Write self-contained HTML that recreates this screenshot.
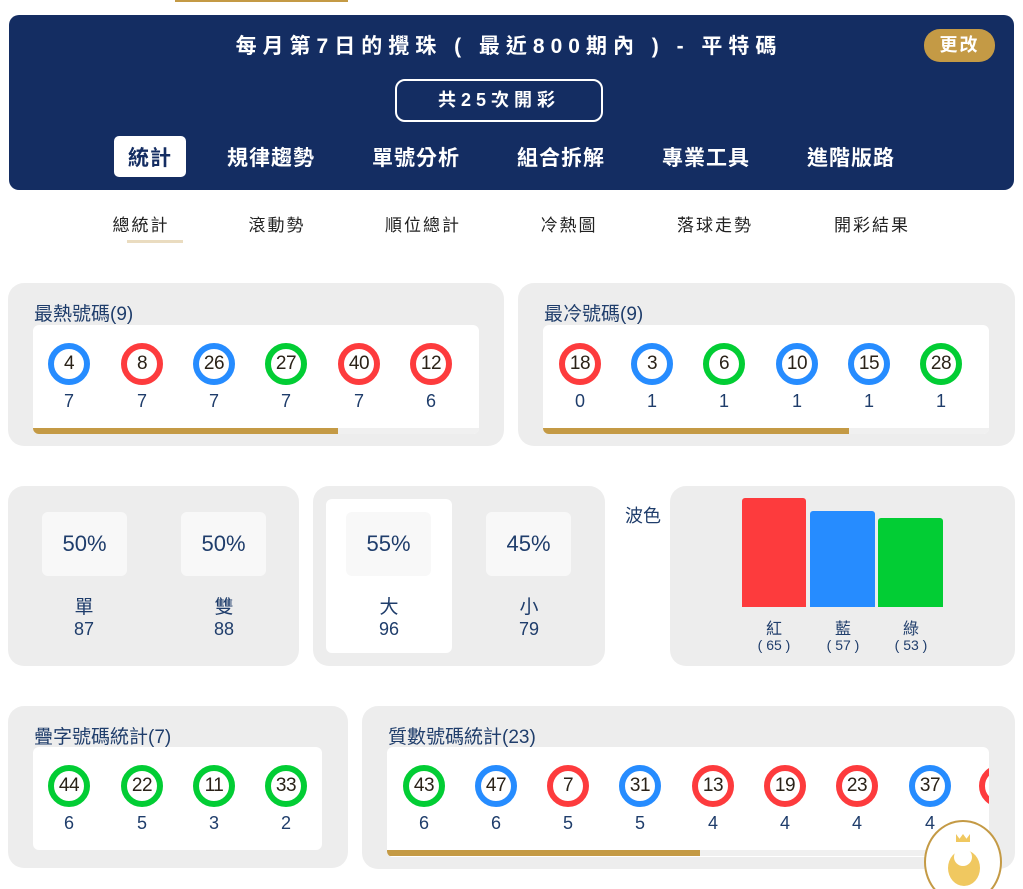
<!DOCTYPE html>
<html><head><meta charset="utf-8"><style>
*{margin:0;padding:0;box-sizing:border-box}
html,body{width:1023px;height:889px;overflow:hidden}
body{background:#fff;font-family:"Liberation Sans","Noto Sans CJK TC",sans-serif;position:relative;color:#1f3d6b}
.a{position:absolute}
.c{position:absolute;text-align:center;transform:translateX(-50%);white-space:nowrap}
.card{position:absolute;background:#ededed;border-radius:16px}
.in{position:absolute;background:#fff;border-radius:6px;overflow:hidden}
.ball{position:absolute;width:42px;height:42px;border-radius:50%;border:6px solid;background:#fff;color:#2a2218;font-size:19px;line-height:30px;text-align:center;transform:translate(-50%,-50%);letter-spacing:-0.5px}
.r{border-color:#fd3b3d}.b{border-color:#268cff}.g{border-color:#02cd34}
.cnt{position:absolute;font-size:18px;transform:translateX(-50%);color:#1f3d6b}
.ttl{position:absolute;font-size:19px;color:#1f3d6b}
.pb{position:absolute;background:#f8f8f8;border-radius:6px;font-size:22px;text-align:center;line-height:64px;width:85px;height:64px}
.tab{position:absolute;color:#fff;font-size:21px;font-weight:bold;letter-spacing:1px;transform:translateX(-50%);top:142px}
.st{position:absolute;font-size:17px;color:#222;letter-spacing:2px;transform:translateX(-50%);top:211px}
</style></head><body>
<div class="a" style="left:175px;top:0;width:173px;height:2px;background:#c49a45"></div>
<div class="a" style="left:9px;top:15px;width:1005px;height:175px;background:#142d62;border-radius:10px"></div>
<div class="c" style="left:509px;top:30px;color:#fff;font-size:21px;font-weight:bold;letter-spacing:6px">每月第7日的攪珠 ( 最近800期內 ) - 平特碼</div>
<div class="a" style="left:924px;top:29px;width:71px;height:33px;background:#c49a45;border-radius:16px;color:#fff;font-size:18px;font-weight:bold;text-align:center;line-height:33px;letter-spacing:2px">更改</div>
<div class="a" style="left:395px;top:79px;width:208px;height:43px;border:2px solid #fff;border-radius:10px;color:#fff;font-size:18px;font-weight:bold;text-align:center;line-height:39px;letter-spacing:5px">共25次開彩</div>
<div class="a" style="left:114px;top:136px;width:72px;height:41px;background:#fff;border-radius:5px"></div>
<div class="tab" style="left:150px;color:#142d62">統計</div>
<div class="tab" style="left:271px">規律趨勢</div>
<div class="tab" style="left:416px">單號分析</div>
<div class="tab" style="left:561px">組合拆解</div>
<div class="tab" style="left:706px">專業工具</div>
<div class="tab" style="left:851px">進階版路</div>
<div class="st" style="left:141px">總統計</div>
<div class="st" style="left:277px">滾動勢</div>
<div class="st" style="left:423px">順位總計</div>
<div class="st" style="left:569px">冷熱圖</div>
<div class="st" style="left:715px">落球走勢</div>
<div class="st" style="left:872px">開彩結果</div>
<div class="a" style="left:127px;top:240px;width:56px;height:3px;background:#eadcc0"></div>

<div class="card" style="left:8px;top:283px;width:496px;height:163px"></div>
<div class="ttl" style="left:34px;top:299px">最熱號碼(9)</div>
<div class="in" style="left:33px;top:325px;width:446px;height:109px">
<div class="a" style="left:0;bottom:0;width:446px;height:6px;background:#f0f0f0"></div>
<div class="a" style="left:0;bottom:0;width:305px;height:6px;background:#c49a45"></div></div>
<div class="ball b" style="left:69px;top:364px">4</div><div class="ball r" style="left:142px;top:364px">8</div><div class="ball b" style="left:214px;top:364px">26</div><div class="ball g" style="left:286px;top:364px">27</div><div class="ball r" style="left:359px;top:364px">40</div><div class="ball r" style="left:431px;top:364px">12</div>
<div class="cnt" style="left:69px;top:391px">7</div><div class="cnt" style="left:142px;top:391px">7</div><div class="cnt" style="left:214px;top:391px">7</div><div class="cnt" style="left:286px;top:391px">7</div><div class="cnt" style="left:359px;top:391px">7</div><div class="cnt" style="left:431px;top:391px">6</div>

<div class="card" style="left:518px;top:283px;width:497px;height:163px"></div>
<div class="ttl" style="left:544px;top:299px">最冷號碼(9)</div>
<div class="in" style="left:543px;top:325px;width:446px;height:109px">
<div class="a" style="left:0;bottom:0;width:446px;height:6px;background:#f0f0f0"></div>
<div class="a" style="left:0;bottom:0;width:306px;height:6px;background:#c49a45"></div></div>
<div class="ball r" style="left:580px;top:364px">18</div><div class="ball b" style="left:652px;top:364px">3</div><div class="ball g" style="left:724px;top:364px">6</div><div class="ball b" style="left:797px;top:364px">10</div><div class="ball b" style="left:869px;top:364px">15</div><div class="ball g" style="left:941px;top:364px">28</div>
<div class="cnt" style="left:580px;top:391px">0</div><div class="cnt" style="left:652px;top:391px">1</div><div class="cnt" style="left:724px;top:391px">1</div><div class="cnt" style="left:797px;top:391px">1</div><div class="cnt" style="left:869px;top:391px">1</div><div class="cnt" style="left:941px;top:391px">1</div>

<div class="card" style="left:8px;top:486px;width:291px;height:180px"></div>
<div class="pb" style="left:42px;top:512px">50%</div><div class="pb" style="left:181px;top:512px">50%</div>
<div class="cnt" style="left:84px;top:592px;font-size:19px">單</div><div class="cnt" style="left:224px;top:592px;font-size:19px">雙</div>
<div class="cnt" style="left:84px;top:619px">87</div><div class="cnt" style="left:224px;top:619px">88</div>
<div class="card" style="left:313px;top:486px;width:292px;height:180px"></div>
<div class="a" style="left:326px;top:499px;width:126px;height:154px;background:#fff;border-radius:6px"></div>
<div class="pb" style="left:346px;top:512px">55%</div><div class="pb" style="left:486px;top:512px">45%</div>
<div class="cnt" style="left:389px;top:592px;font-size:19px">大</div><div class="cnt" style="left:529px;top:592px;font-size:19px">小</div>
<div class="cnt" style="left:389px;top:619px">96</div><div class="cnt" style="left:529px;top:619px">79</div>
<div class="ttl" style="left:625px;top:502px;font-size:18px">波色</div>
<div class="card" style="left:670px;top:486px;width:345px;height:180px"></div>
<div class="a" style="left:742px;top:498px;width:64px;height:109px;background:#fd3b3d;border-radius:3px 3px 0 0"></div>
<div class="a" style="left:810px;top:511px;width:65px;height:96px;background:#268cff;border-radius:3px 3px 0 0"></div>
<div class="a" style="left:878px;top:518px;width:65px;height:89px;background:#02cd34;border-radius:3px 3px 0 0"></div>
<div class="cnt" style="left:774px;top:615px;font-size:16px">紅</div><div class="cnt" style="left:843px;top:615px;font-size:16px">藍</div><div class="cnt" style="left:911px;top:615px;font-size:16px">綠</div>
<div class="cnt" style="left:774px;top:637px;font-size:14px">( 65 )</div><div class="cnt" style="left:843px;top:637px;font-size:14px">( 57 )</div><div class="cnt" style="left:911px;top:637px;font-size:14px">( 53 )</div>

<div class="card" style="left:8px;top:706px;width:340px;height:162px"></div>
<div class="ttl" style="left:34px;top:722px">疊字號碼統計(7)</div>
<div class="in" style="left:33px;top:747px;width:289px;height:103px"></div>
<div class="ball g" style="left:69px;top:786px">44</div><div class="ball g" style="left:142px;top:786px">22</div><div class="ball g" style="left:214px;top:786px">11</div><div class="ball g" style="left:286px;top:786px">33</div>
<div class="cnt" style="left:69px;top:813px">6</div><div class="cnt" style="left:142px;top:813px">5</div><div class="cnt" style="left:214px;top:813px">3</div><div class="cnt" style="left:286px;top:813px">2</div>

<div class="card" style="left:362px;top:706px;width:653px;height:163px"></div>
<div class="ttl" style="left:388px;top:722px">質數號碼統計(23)</div>
<div class="in" style="left:387px;top:747px;width:602px;height:110px">
<div class="ball r" style="left:613px;top:39px">41</div>
<div class="a" style="left:0;top:103px;width:602px;height:6px;background:#f0f0f0"></div>
<div class="a" style="left:0;top:103px;width:313px;height:6px;background:#c49a45"></div></div>
<div class="ball g" style="left:424px;top:786px">43</div><div class="ball b" style="left:496px;top:786px">47</div><div class="ball r" style="left:568px;top:786px">7</div><div class="ball b" style="left:640px;top:786px">31</div><div class="ball r" style="left:713px;top:786px">13</div><div class="ball r" style="left:785px;top:786px">19</div><div class="ball r" style="left:857px;top:786px">23</div><div class="ball b" style="left:930px;top:786px">37</div>
<div class="cnt" style="left:424px;top:813px">6</div><div class="cnt" style="left:496px;top:813px">6</div><div class="cnt" style="left:568px;top:813px">5</div><div class="cnt" style="left:640px;top:813px">5</div><div class="cnt" style="left:713px;top:813px">4</div><div class="cnt" style="left:785px;top:813px">4</div><div class="cnt" style="left:857px;top:813px">4</div><div class="cnt" style="left:930px;top:813px">4</div>

<div class="a" style="left:924px;top:820px;width:78px;height:84px;border-radius:50%;border:2px solid #c49a45;background:#fff"></div>
<div class="a" style="left:948px;top:850px;width:32px;height:36px;border-radius:50%;background:#f0c860"></div>
<div class="a" style="left:954px;top:848px;width:18px;height:18px;border-radius:50%;background:#fff"></div>
<div class="a" style="left:956px;top:834px;width:14px;height:8px;background:#f0c860;clip-path:polygon(0 100%,0 0,25% 60%,50% 0,75% 60%,100% 0,100% 100%)"></div>
</body></html>
